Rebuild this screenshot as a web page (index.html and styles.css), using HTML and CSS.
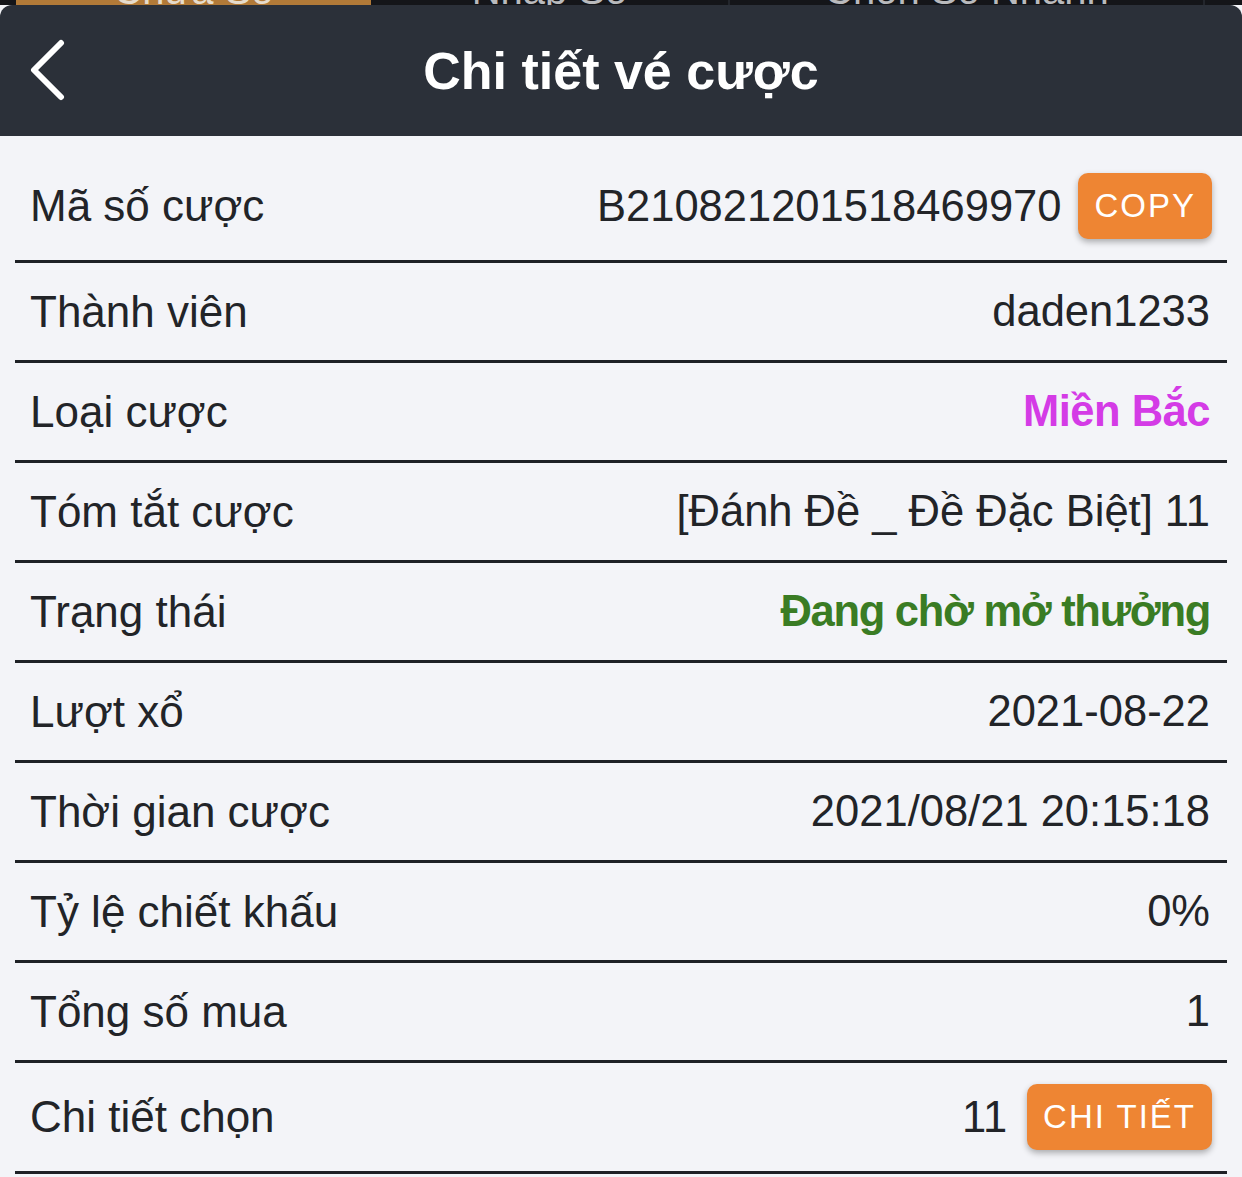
FILE: index.html
```html
<!DOCTYPE html>
<html lang="vi">
<head>
<meta charset="utf-8">
<link rel="stylesheet" href="styles.css">
</head>
<body>
<div class="screen">
  <div class="tabs">
    <div class="tab active"><span>Chưa Số</span></div>
    <div class="tab"><span>Nhập Số</span></div>
    <div class="tab"><span>Chọn Số Nhanh</span></div>
  </div>
  <header class="header">
    <svg class="back" width="40" height="62" viewBox="0 0 40 62">
      <path d="M34 4 L7 31 L34 58" fill="none" stroke="#fff" stroke-width="6" stroke-linecap="round" stroke-linejoin="round"/>
    </svg>
    <h1 class="title">Chi tiết vé cược</h1>
  </header>
  <main class="list">
    <div class="row row-btn">
      <span class="label">Mã số cược</span>
      <span class="value">B210821201518469970<button class="btn btn-copy">COPY</button></span>
    </div>
    <div class="row">
      <span class="label">Thành viên</span>
      <span class="value">daden1233</span>
    </div>
    <div class="row">
      <span class="label">Loại cược</span>
      <span class="value magenta">Miền Bắc</span>
    </div>
    <div class="row">
      <span class="label">Tóm tắt cược</span>
      <span class="value">[Đánh Đề _ Đề Đặc Biệt] 11</span>
    </div>
    <div class="row">
      <span class="label">Trạng thái</span>
      <span class="value green">Đang chờ mở thưởng</span>
    </div>
    <div class="row">
      <span class="label">Lượt xổ</span>
      <span class="value">2021-08-22</span>
    </div>
    <div class="row">
      <span class="label">Thời gian cược</span>
      <span class="value">2021/08/21 20:15:18</span>
    </div>
    <div class="row">
      <span class="label">Tỷ lệ chiết khấu</span>
      <span class="value">0%</span>
    </div>
    <div class="row">
      <span class="label">Tổng số mua</span>
      <span class="value">1</span>
    </div>
    <div class="row row-btn">
      <span class="label">Chi tiết chọn</span>
      <span class="value">11<button class="btn btn-detail">CHI TIẾT</button></span>
    </div>
  </main>
</div>
</body>
</html>
```
FILE: styles.css
```css
html, body {
  margin: 0;
  padding: 0;
  background: #f3f4f8;
}
body {
  font-family: "Liberation Sans", Arial, sans-serif;
  color: #222428;
}
.screen {
  width: 1242px;
  height: 1177px;
  overflow: hidden;
  background: #f3f4f8;
}
.tabs {
  display: flex;
  height: 5px;
  overflow: hidden;
  background: #141519;
}
.tab {
  height: 5px;
  flex: 0 0 auto;
  display: flex;
  justify-content: center;
  align-items: flex-end;
  overflow: hidden;
  border-right: 2px solid #23262c;
  box-sizing: border-box;
}
.tab:nth-child(1) { width: 355px; margin-left: 16px; background: #b27a38; border-right: 0; }
.tab:nth-child(2) { width: 359px; }
.tab:nth-child(3) { width: 475px; }
.tab span {
  display: block;
  font-size: 40px;
  line-height: 40px;
  color: #b9babd;
  margin-bottom: -5px;
}
.tab.active span {
  color: #e6dccd;
}
.header {
  height: 131px;
  background: #2b3039;
  border-radius: 12px 12px 0 0;
  display: flex;
  align-items: center;
  justify-content: center;
  position: relative;
}
.back {
  position: absolute;
  left: 27px;
  top: 34px;
}
.title {
  margin: 0;
  font-size: 52px;
  font-weight: 700;
  color: #ffffff;
}
.list {
  padding: 16px 15px 0;
}
.row {
  min-height: 97px;
  display: flex;
  align-items: center;
  justify-content: space-between;
  padding: 0 17px 0 15px;
  border-bottom: 3px solid #1e2126;
}
.row-btn {
  min-height: 108px;
  padding-right: 15px;
}
.label {
  font-size: 44px;
}
.value {
  display: flex;
  align-items: center;
  font-size: 43.5px;
}
.magenta {
  color: #d43be6;
  font-weight: 700;
  letter-spacing: -0.5px;
}
.green {
  color: #3a7c24;
  font-weight: 700;
  letter-spacing: -1.3px;
}
.btn {
  border: 0;
  background: #ee8533;
  color: #ffffff;
  font-family: "Liberation Sans", Arial, sans-serif;
  font-size: 33px;
  letter-spacing: 2px;
  height: 66px;
  border-radius: 10px;
  box-shadow: 0 3px 6px rgba(0, 0, 0, 0.3);
  padding: 0 16px;
  margin-left: 17px;
}
.btn-detail {
  margin-left: 20px;
}
```
